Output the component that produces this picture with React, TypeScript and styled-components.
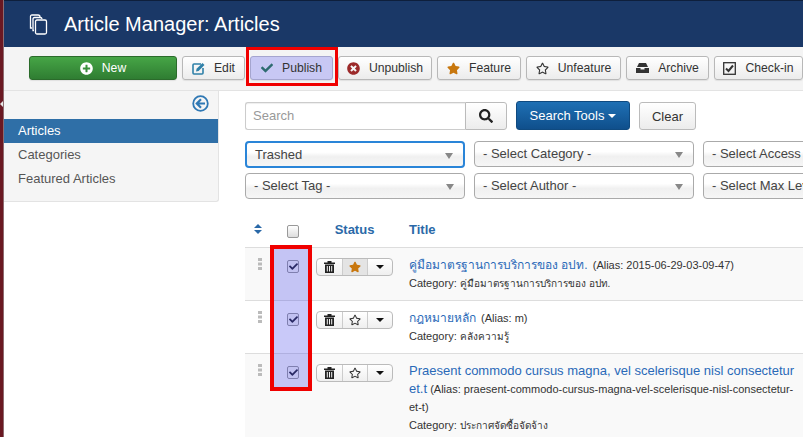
import React from "react";
import styled, { createGlobalStyle } from "styled-components";
import { FaPlusCircle, FaCheck, FaTimesCircle, FaStar, FaRegStar, FaSearch } from "react-icons/fa";

const Global = createGlobalStyle`
  html, body { margin: 0; padding: 0; background: #fff; overflow: hidden; }
  body { font-family: "Liberation Sans", Arial, "Noto Sans", sans-serif; font-size: 13px; color: #333; }
  #root { width: 803px; height: 437px; overflow: hidden; }
  * { box-sizing: border-box; }
`;

const Page = styled.div`
  position: relative;
  display: flex;
  width: 803px;
  height: 437px;
  overflow: hidden;
`;
const Strip = styled.div`
  position: relative;
  flex: 0 0 4px;
  background: #6a1822;
  border-right: 1px solid #8d6b70;
  &::after {
    content: "";
    position: absolute;
    left: 0;
    top: 101px;
    border: 3px solid transparent;
    border-left: 0;
    border-right: 3px solid #e6e6e6;
  }
`;
const Body = styled.div`
  flex: 1;
  min-width: 0;
  display: flex;
  flex-direction: column;
`;
const Header = styled.header`
  height: 47px;
  flex: none;
  margin-left: -1px;
  background: #1a3867;
  border-top: 1px solid #0e1f3c;
  display: flex;
  align-items: center;
  gap: 16px;
  padding-left: 26px;
  color: #fff;
`;
const HeaderTitle = styled.h1`
  margin: 0;
  font-size: 20px;
  font-weight: 400;
  line-height: 24px;
`;
const Toolbar = styled.div`
  height: 44px;
  flex: none;
  margin-left: -1px;
  background: #f4f4f4;
  border-bottom: 1px solid #e3e3e3;
  display: flex;
  align-items: flex-start;
  padding: 9px 0 0 26px;
  gap: 5px;
`;
const Btn = styled.button<{ $w: number; $green?: boolean; $active?: boolean }>`
  position: relative;
  width: ${(p) => p.$w}px;
  height: 24px;
  flex: none;
  padding: 0;
  display: flex;
  align-items: center;
  justify-content: center;
  gap: 9px;
  font: 12.2px "Liberation Sans", Arial, sans-serif;
  border-radius: 3px;
  color: ${(p) => (p.$green ? "#fff" : "#333")};
  border: 1px solid ${(p) => (p.$green ? "#2b6b2b" : p.$active ? "#a5a5cf" : "#b8b8b8")};
  background: ${(p) =>
    p.$green
      ? "linear-gradient(#46a546, #2f7d32)"
      : p.$active
        ? "#c8c8f4"
        : "linear-gradient(#fff, #ececec)"};
  box-shadow: 0 1px 1px rgba(0, 0, 0, 0.08);
`;
const PublishMark = styled.span`
  position: absolute;
  left: -5px;
  top: -10px;
  width: 92px;
  height: 39px;
  border: 3px solid #f00000;
  pointer-events: none;
`;
const Content = styled.div`
  flex: 1;
  min-height: 0;
  display: flex;
  align-items: flex-start;
`;
const Sidebar = styled.aside`
  flex: 0 0 215px;
  height: 111px;
  background: #f5f5f5;
  border: 1px solid #e3e3e3;
  border-width: 0 1px 1px 0;
  border-bottom-right-radius: 3px;
  padding-top: 4px;
`;
const Collapse = styled.div`
  display: flex;
  justify-content: flex-end;
  height: 24px;
  padding-right: 9px;
`;
const NavItem = styled.div<{ $on?: boolean }>`
  height: 24px;
  line-height: 24px;
  padding-left: 14px;
  font-size: 13px;
  color: ${(p) => (p.$on ? "#fff" : "#555")};
  background: ${(p) => (p.$on ? "#2f6fa7" : "transparent")};
`;
const Main = styled.main`
  flex: none;
  width: 640px;
  margin-left: 26px;
  padding-top: 10px;
`;
const SearchRow = styled.div`
  display: flex;
  align-items: flex-start;
  height: 29px;
`;
const SearchInput = styled.div`
  width: 220px;
  height: 28px;
  line-height: 26px;
  margin-top: 1px;
  padding-left: 7px;
  font-size: 13px;
  color: #999;
  border: 1px solid #ccc;
  border-right: 0;
  border-radius: 3px 0 0 3px;
  box-shadow: inset 0 1px 1px rgba(0, 0, 0, 0.07);
`;
const SearchBtn = styled.button`
  width: 42px;
  height: 28px;
  margin-top: 1px;
  padding: 0;
  display: flex;
  align-items: center;
  justify-content: center;
  color: #222;
  border: 1px solid #bbb;
  border-radius: 0 3px 3px 0;
  background: linear-gradient(#fff, #ececec);
`;
const ToolsBtn = styled.button`
  width: 114px;
  height: 29px;
  margin-left: 9px;
  padding: 0;
  display: flex;
  align-items: center;
  justify-content: center;
  gap: 4px;
  font: 13px "Liberation Sans", Arial, sans-serif;
  color: #fff;
  border: 1px solid #0f4a80;
  border-radius: 3px;
  background: linear-gradient(#1f70b4, #0f4f8c);
`;
const Caret = styled.span<{ $c?: string }>`
  display: inline-block;
  border: 4px solid transparent;
  border-bottom: 0;
  border-top-color: ${(p) => p.$c || "#fff"};
`;
const ClearBtn = styled.button`
  width: 57px;
  height: 28px;
  margin: 1px 0 0 9px;
  padding: 0;
  font: 13px "Liberation Sans", Arial, sans-serif;
  color: #333;
  border: 1px solid #bbb;
  border-radius: 3px;
  background: linear-gradient(#fff, #ececec);
`;
const Filters = styled.div`
  display: grid;
  grid-template-columns: repeat(3, 220px);
  column-gap: 9px;
  margin-top: 11px;
`;
const Select = styled.div<{ $focus?: boolean }>`
  position: relative;
  height: ${(p) => (p.$focus ? 27 : 26)}px;
  margin-bottom: ${(p) => (p.$focus ? 5 : 6)}px;
  line-height: 24px;
  padding-left: 8px;
  font-size: 13px;
  color: #444;
  white-space: nowrap;
  overflow: hidden;
  border-radius: 4px;
  border: ${(p) => (p.$focus ? "2px solid #2a85d8" : "1px solid #aaa")};
  background: linear-gradient(#fff 40%, #f0f0f0 60%, #f6f6f6);
`;
const SelectTri = styled.span`
  position: absolute;
  right: 10px;
  top: 10px;
  border: 4px solid transparent;
  border-bottom: 0;
  border-top: 6px solid #888;
`;
const Table = styled.div`
  position: relative;
  margin-top: 6px;
  width: 640px;
`;
const Head = styled.div`
  display: grid;
  grid-template-columns: 25px 42px 85px 1fr;
  height: 36px;
  align-items: center;
  font-size: 13px;
  font-weight: 700;
  color: #2a69a8;
`;
const Row = styled.div<{ $h: number; $alt?: boolean }>`
  display: grid;
  grid-template-columns: 25px 42px 85px 1fr;
  height: ${(p) => p.$h}px;
  border-top: 1px solid #ddd;
  background: ${(p) => (p.$alt ? "#f9f9f9" : "#fff")};
`;
const Cell = styled.div<{ $center?: boolean }>`
  display: flex;
  justify-content: ${(p) => (p.$center ? "center" : "flex-start")};
`;
const HeadTitle = styled.div`
  padding-left: 12px;
`;
const DragCell = styled(Cell)`
  padding: 10px 0 0 13px;
`;
const CheckCell = styled(Cell)`
  justify-content: center;
  padding: 12px 0 0 4px;
`;
const HeadCheckCell = styled.div`
  display: flex;
  justify-content: center;
  padding: 5px 0 0 4px;
`;
const Box = styled.span<{ $on?: boolean }>`
  width: 12px;
  height: 13px;
  border-radius: 2px;
  display: flex;
  align-items: center;
  justify-content: center;
  color: #223;
  border: 1px solid #999;
  background: ${(p) => (p.$on ? "#f4f4f4" : "linear-gradient(#fff, #ddd)")};
`;
const Group = styled.div`
  height: 18px;
  margin: 10px 0 0 4px;
  width: 77px;
  display: grid;
  grid-template-columns: 25px 25px 25px;
  border: 1px solid #bbb;
  border-radius: 4px;
  overflow: hidden;
  background: linear-gradient(#fff, #efefef);
`;
const GroupCell = styled.span<{ $on?: boolean }>`
  display: flex;
  align-items: center;
  justify-content: center;
  border-left: 1px solid #ccc;
  background: ${(p) => (p.$on ? "#e4e4e4" : "transparent")};
  &:first-child { border-left: 0; }
`;
const TitleCell = styled.div`
  padding: 8px 0 0 12px;
  width: 400px;
  font-size: 11px;
  line-height: 18px;
  color: #333;
`;
const Link = styled.a`
  font-size: 13px;
  line-height: 18px;
  color: #2a69b8;
`;
const ThaiLink = styled(Link)`
  font-size: 12px;
  margin-right: 2px;
`;
const Meta = styled.div`
  font-size: 11px;
  line-height: 18px;
`;
const ThaiMeta = styled.span`
  font-size: 10px;
`;
const ColumnMark = styled.span`
  position: absolute;
  left: 25px;
  top: 34px;
  width: 42px;
  height: 146px;
  border: 4px solid #f00000;
  background: rgba(60, 60, 235, 0.28);
  background-clip: padding-box;
  pointer-events: none;
`;

const CopiesIcon = () => (
  <svg width="19" height="21" viewBox="0 0 19 21" fill="none" stroke="#fff" strokeWidth="1.3">
    <path d="M3 14H1.500V2.500Q1.500 1 3 1H9Q11 1 11 3" />
    <path d="M5 16.500H4V5Q4 3.500 5.500 3.500H11Q13 3.500 13 5" />
    <rect x="6.500" y="6" width="11" height="14" rx="1.500" />
  </svg>
);
const EditIcon = () => (
  <svg width="13" height="13" viewBox="0 0 13 13" fill="none">
    <path d="M9 2H2Q1 2 1 3V11Q1 12 2 12H10Q11 12 11 11V6" stroke="#2f80a8" strokeWidth="1.600" />
    <path d="M4 9.500L4.600 6.800L10.500 1L12.500 3L6.600 8.900Z" fill="#2f80a8" />
  </svg>
);
const ArchiveIcon = () => (
  <svg width="13" height="10" viewBox="0 0 13 10">
    <path d="M3 0H10L12 4H1Z" fill="#333" />
    <path d="M0 5H4.500V6.500H8.500V5H13V10H0Z" fill="#333" />
  </svg>
);
const CheckinIcon = () => (
  <svg width="13" height="13" viewBox="0 0 13 13" fill="none">
    <rect x="0.700" y="0.700" width="11.600" height="11.600" stroke="#333" strokeWidth="1.300" />
    <path d="M3 6.500L5.500 9L10 3.500" stroke="#333" strokeWidth="2" />
  </svg>
);
const TrashIcon = () => (
  <svg width="11" height="12" viewBox="0 0 11 12">
    <path d="M0 1.500H3.500V0H7.500V1.500H11V3H0Z" fill="#222" />
    <path d="M1 3.500H10V12H1ZM2.800 5V10.500H3.800V5ZM5 5V10.500H6V5ZM7.200 5V10.500H8.200V5Z" fill="#222" fillRule="evenodd" />
  </svg>
);
const BackIcon = () => (
  <svg width="17" height="17" viewBox="0 0 17 17" fill="none" stroke="#2f78b4">
    <circle cx="8.500" cy="8.500" r="7.300" strokeWidth="1.800" />
    <path d="M9 4.300L4.800 8.500L9 12.700M5 8.500H13" strokeWidth="2.200" />
  </svg>
);
const SortIcon = () => (
  <svg width="8" height="10" viewBox="0 0 8 10" fill="#2a69a8">
    <path d="M4 0L8 4H0Z" />
    <path d="M4 10L0 6H8Z" />
  </svg>
);
const DragIcon = () => (
  <svg width="4" height="12" viewBox="0 0 4 12" fill="#bbb">
    <rect width="4" height="3" />
    <rect y="4.500" width="4" height="3" />
    <rect y="9" width="4" height="3" />
  </svg>
);

const Checked = () => (
  <Box $on>
    <FaCheck size={9} />
  </Box>
);

const Status = ({ on }: { on?: boolean }) => (
  <Group>
    <GroupCell>
      <TrashIcon />
    </GroupCell>
    <GroupCell $on={on}>
      {on ? <FaStar size={12} color="#c8770e" /> : <FaRegStar size={12} color="#333" />}
    </GroupCell>
    <GroupCell>
      <Caret $c="#111" />
    </GroupCell>
  </Group>
);

export default function App() {
  return (
    <Page>
      <Global />
      <Strip />
      <Body>
        <Header>
          <CopiesIcon />
          <HeaderTitle>Article Manager: Articles</HeaderTitle>
        </Header>
        <Toolbar>
          <Btn $w={148} $green>
            <FaPlusCircle size={13} />
            New
          </Btn>
          <Btn $w={63}>
            <EditIcon />
            Edit
          </Btn>
          <Btn $w={83} $active>
            <FaCheck size={12} color="#2e6b70" />
            Publish
            <PublishMark />
          </Btn>
          <Btn $w={94}>
            <FaTimesCircle size={13} color="#9c2a2a" />
            Unpublish
          </Btn>
          <Btn $w={84}>
            <FaStar size={13} color="#c8770e" />
            Feature
          </Btn>
          <Btn $w={95}>
            <FaRegStar size={13} color="#333" />
            Unfeature
          </Btn>
          <Btn $w={83}>
            <ArchiveIcon />
            Archive
          </Btn>
          <Btn $w={89}>
            <CheckinIcon />
            Check-in
          </Btn>
        </Toolbar>
        <Content>
          <Sidebar>
            <Collapse>
              <BackIcon />
            </Collapse>
            <NavItem $on>Articles</NavItem>
            <NavItem>Categories</NavItem>
            <NavItem>Featured Articles</NavItem>
          </Sidebar>
          <Main>
            <SearchRow>
              <SearchInput>Search</SearchInput>
              <SearchBtn>
                <FaSearch size={14} />
              </SearchBtn>
              <ToolsBtn>
                Search Tools <Caret />
              </ToolsBtn>
              <ClearBtn>Clear</ClearBtn>
            </SearchRow>
            <Filters>
              <Select $focus>
                Trashed
                <SelectTri />
              </Select>
              <Select>
                - Select Category -
                <SelectTri />
              </Select>
              <Select>- Select Access -</Select>
              <Select>
                - Select Tag -
                <SelectTri />
              </Select>
              <Select>
                - Select Author -
                <SelectTri />
              </Select>
              <Select>- Select Max Levels -</Select>
            </Filters>
            <Table>
              <Head>
                <Cell $center>
                  <SortIcon />
                </Cell>
                <HeadCheckCell>
                  <Box />
                </HeadCheckCell>
                <Cell $center>Status</Cell>
                <HeadTitle>Title</HeadTitle>
              </Head>
              <Row $h={53} $alt>
                <DragCell>
                  <DragIcon />
                </DragCell>
                <CheckCell>
                  <Checked />
                </CheckCell>
                <Cell>
                  <Status on />
                </Cell>
                <TitleCell>
                  <ThaiLink>คู่มือมาตรฐานการบริการของ อปท.</ThaiLink> (Alias: 2015-06-29-03-09-47)
                  <Meta>
                    Category: <ThaiMeta>คู่มือมาตรฐานการบริการของ อปท.</ThaiMeta>
                  </Meta>
                </TitleCell>
              </Row>
              <Row $h={53}>
                <DragCell>
                  <DragIcon />
                </DragCell>
                <CheckCell>
                  <Checked />
                </CheckCell>
                <Cell>
                  <Status />
                </Cell>
                <TitleCell>
                  <ThaiLink>กฎหมายหลัก</ThaiLink> (Alias: m)
                  <Meta>
                    Category: <ThaiMeta>คลังความรู้</ThaiMeta>
                  </Meta>
                </TitleCell>
              </Row>
              <Row $h={90} $alt>
                <DragCell>
                  <DragIcon />
                </DragCell>
                <CheckCell>
                  <Checked />
                </CheckCell>
                <Cell>
                  <Status />
                </Cell>
                <TitleCell>
                  <Link>Praesent commodo cursus magna, vel scelerisque nisl consectetur et.t</Link>{" "}
                  (Alias: praesent-commodo-cursus-magna-vel-scelerisque-nisl-consectetur-et-t)
                  <Meta>
                    Category: <ThaiMeta>ประกาศจัดซื้อจัดจ้าง</ThaiMeta>
                  </Meta>
                </TitleCell>
              </Row>
              <ColumnMark />
            </Table>
          </Main>
        </Content>
      </Body>
    </Page>
  );
}
